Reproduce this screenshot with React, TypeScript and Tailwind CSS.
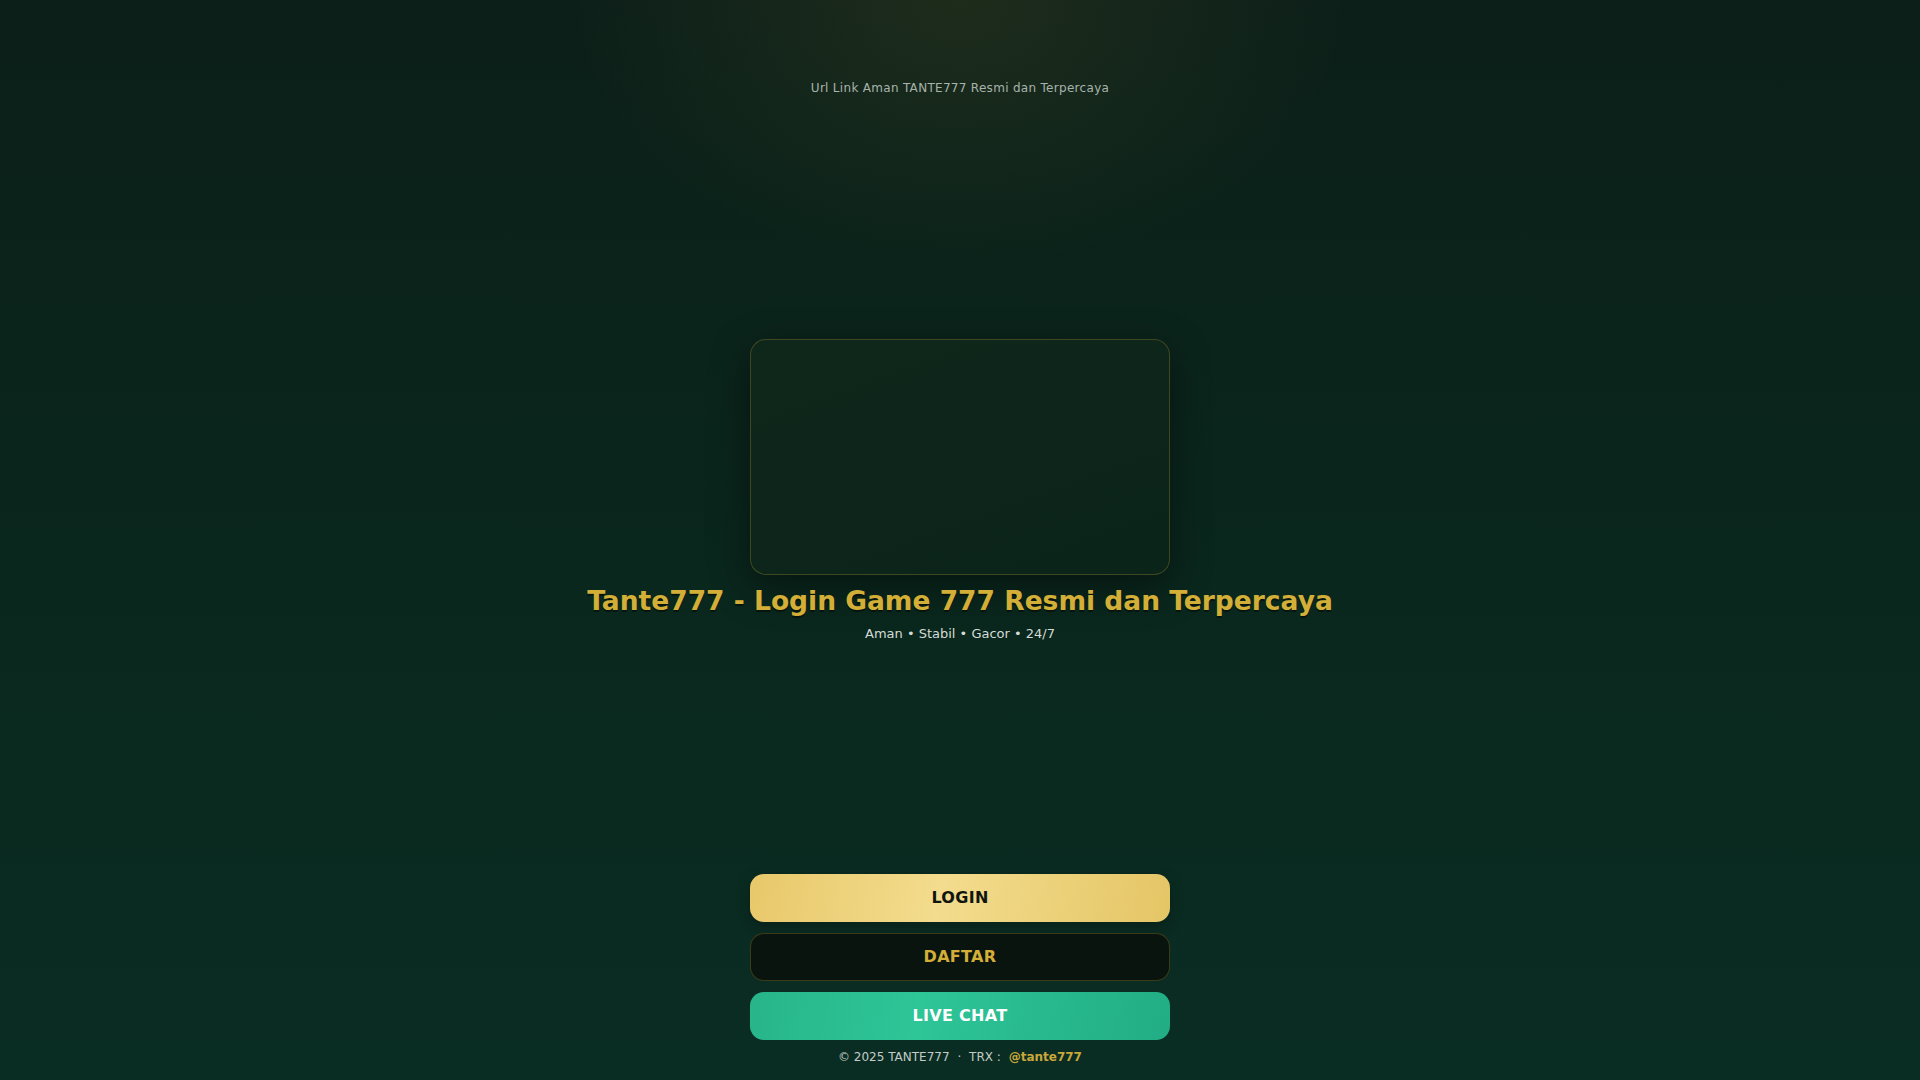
import React from 'react';

const App: React.FC = () => {
  return (
    <div className="relative h-screen w-full overflow-hidden font-['DejaVu_Sans',_'Liberation_Sans',_sans-serif] bg-[radial-gradient(ellipse_520px_360px_at_50%_0%,rgba(212,175,55,0.09),transparent_75%),linear-gradient(180deg,#0c1f19_0%,#0a261c_45%,#0a2d23_100%)]">
      <div className="flex h-full flex-col items-center">
        {/* Header */}
        <p className="pt-[79px] text-[12px] leading-[18px] tracking-[0.3px] text-[#a7b3ac]">
          Url Link Aman TANTE777 Resmi dan Terpercaya
        </p>

        {/* Banner */}
        <div className="mt-[242px] h-[236px] w-[420px] rounded-[16px] border border-[#d4af37]/25 bg-[linear-gradient(160deg,#0f261b,#0b2419)] shadow-[0_12px_40px_rgba(0,0,0,0.45)]"></div>

        <h1 className="mt-[10px] text-[26.5px] font-bold leading-[32px] text-[#d4af37] [text-shadow:0_2px_0_rgba(0,0,0,0.45)]">
          Tante777 - Login Game 777 Resmi dan Terpercaya
        </h1>
        <p className="mt-[8px] text-[13px] leading-[18px] text-[#d3dbd6]">
          Aman • Stabil • Gacor • 24/7
        </p>

        {/* Actions */}
        <div className="mt-auto flex w-[420px] flex-col gap-[11px] pb-[15px]">
          <button className="h-[48px] w-full rounded-[14px] bg-[linear-gradient(100deg,#e8c86a_0%,#f3dc8e_45%,#e5c666_100%)] text-[16px] font-bold tracking-[0.3px] text-[#111510] shadow-[0_4px_14px_rgba(0,0,0,0.25)]">
            LOGIN
          </button>
          <button className="h-[48px] w-full rounded-[14px] border border-[#d4af37]/25 bg-[#0a140f] text-[16px] font-bold tracking-[0.3px] text-[#d4af37]">
            DAFTAR
          </button>
          <button className="h-[48px] w-full rounded-[14px] bg-[linear-gradient(100deg,#27b589_0%,#2ec597_40%,#22ad85_100%)] text-[16px] font-bold tracking-[0.3px] text-white">
            LIVE CHAT
          </button>
          <p className="mt-[-2px] text-center text-[12px] leading-[16px] text-[#c3ccc7]">
            © 2025 TANTE777 <span className="mx-[4px]">·</span> TRX :{' '}
            <span className="ml-[4px] font-bold text-[#c9a73a]">@tante777</span>
          </p>
        </div>
      </div>
    </div>
  );
};

export default App;
